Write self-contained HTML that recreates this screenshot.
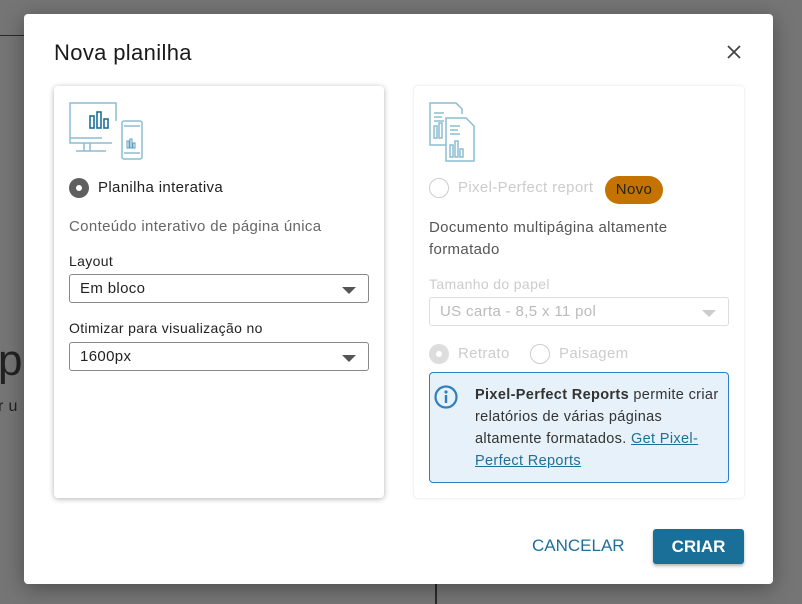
<!DOCTYPE html>
<html><head><meta charset="utf-8"><style>
*{box-sizing:border-box;margin:0;padding:0}
body{width:802px;height:602px;overflow:hidden;background:#757575;font-family:"Liberation Sans",sans-serif;position:relative;color:#222;letter-spacing:.35px}
.bgline{position:absolute;left:0;top:35px;width:30px;height:1px;background:#2a2a2a}
.vline{position:absolute;left:435px;top:584px;width:2px;height:20px;background:#2a2a2a}
.bgp{position:absolute;left:-2px;top:336px;font-size:44px;color:#222}
.bgr{position:absolute;left:-2px;top:398px;font-size:16px;color:#222}
.modal{position:absolute;left:24px;top:14px;width:749px;height:570px;background:#fff;border-radius:4px;box-shadow:0 4px 20px rgba(0,0,0,.35)}
h1{position:absolute;left:30px;top:26px;font-size:22px;font-weight:normal;color:#1a1a1a}
.close{position:absolute;left:702px;top:30px}
.card{position:absolute;top:72px;width:330px;background:#fff;border-radius:4px}
.c1{left:30px;height:412px;box-shadow:0 1px 6px rgba(0,0,0,.3)}
.c2{left:390px;height:412px;box-shadow:0 0 3px rgba(0,0,0,.12)}
.abs{position:absolute}
.radio{position:absolute;width:20px;height:20px;border-radius:50%}
.sel{border:1px solid #ddd;border-radius:3px;height:29px;position:absolute;left:15px;width:300px;font-size:15px;padding:5px 10px}
.arrow{position:absolute;right:12px;top:12px;width:0;height:0;border-left:7px solid transparent;border-right:7px solid transparent;border-top:7px solid #555}
</style></head><body>
<div class="bgline"></div><div class="vline"></div>
<div class="bgp">p</div><div class="bgr">r u</div>
<div class="modal">
<h1>Nova planilha</h1>
<svg class="close" width="16" height="16" viewBox="0 0 16 16"><path d="M2 2L14 14M14 2L2 14" stroke="#444" stroke-width="1.8"/></svg>

<div class="card c1">
<svg class="abs" style="left:14px;top:15px" width="76" height="60" viewBox="0 0 76 60">
<g fill="none" stroke="#8bbdd3" stroke-width="1.5"><path d="M48 20V2H2V42H44M34 37H2M16 42v8M22 42v8M8 50h30"/>
<rect x="54" y="20" width="20" height="38" rx="2"/><path d="M56 25h16M56 52h16"/></g>
<g fill="none" stroke="#1f6f98" stroke-width="1.6"><rect x="22" y="15" width="4" height="12"/><rect x="29" y="11" width="4" height="16"/><rect x="36" y="18" width="4" height="9"/></g>
<g fill="none" stroke="#5a9cbf" stroke-width="1"><rect x="59" y="40" width="2" height="7"/><rect x="62" y="38" width="2" height="9"/><rect x="65" y="42" width="2" height="5"/></g>
</svg>
<div class="radio" style="left:15px;top:92px;background:#5f5f5f"><div style="position:absolute;left:7px;top:7px;width:6px;height:6px;border-radius:50%;background:#fff"></div></div>
<div class="abs" style="left:44px;top:93px;font-size:15px;color:#222">Planilha interativa</div>
<div class="abs" style="left:15px;top:132px;font-size:15px;color:#666">Conteúdo interativo de página única</div>
<div class="abs" style="left:15px;top:167px;font-size:14px;color:#222">Layout</div>
<div class="sel" style="top:188px;border-color:#888">Em bloco<div class="arrow"></div></div>
<div class="abs" style="left:15px;top:234px;font-size:14px;color:#222">Otimizar para visualização no</div>
<div class="sel" style="top:256px;border-color:#888">1600px<div class="arrow"></div></div>
</div>

<div class="card c2">
<svg class="abs" style="left:14px;top:15px" width="50" height="62" viewBox="0 0 50 62">
<g fill="none" stroke="#8bbdd3" stroke-width="1.5"><path d="M16 2H2V44H18M16 2h12l6 6v5"/>
<path d="M18 17H38l8 8V60H18Z"/><path d="M6 12h10M6 16h8M6 20h10M22 25h10M22 29h8M22 33h10"/>
<rect x="6" y="25" width="3" height="12"/><rect x="11" y="22" width="3" height="15"/>
<rect x="22" y="44" width="3" height="12"/><rect x="27" y="40" width="3" height="16"/><rect x="32" y="48" width="3" height="8"/></g></svg>
<div class="radio" style="left:15px;top:92px;border:1.5px solid #ccc"></div>
<div class="abs" style="left:44px;top:93px;font-size:15px;color:#ccc">Pixel-Perfect report</div>
<div class="abs" style="left:191px;top:90px;width:58px;height:28px;border-radius:14px;background:#c47300;color:#222;font-size:15px;text-align:center;line-height:28px">Novo</div>
<div class="abs" style="left:15px;top:131px;font-size:15px;color:#555;line-height:22px;width:300px">Documento multipágina altamente<br>formatado</div>
<div class="abs" style="left:15px;top:190px;font-size:14px;color:#ccc">Tamanho do papel</div>
<div class="sel" style="top:211px;color:#bbb">US carta - 8,5 x 11 pol<div class="arrow" style="border-top-color:#ccc"></div></div>
<div class="radio" style="left:15px;top:258px;background:#ddd"><div style="position:absolute;left:7px;top:7px;width:6px;height:6px;border-radius:50%;background:#fff"></div></div>
<div class="abs" style="left:44px;top:259px;font-size:15px;color:#ccc">Retrato</div>
<div class="radio" style="left:116px;top:258px;border:1.5px solid #ccc"></div>
<div class="abs" style="left:145px;top:259px;font-size:15px;color:#ccc">Paisagem</div>
<div class="abs" style="left:15px;top:286px;width:300px;height:111px;background:#e7f1f9;border:1px solid #2d7fc1;border-radius:4px">
<svg class="abs" style="left:3px;top:11px" width="26" height="26" viewBox="0 0 26 26"><circle cx="13" cy="13" r="10.5" fill="none" stroke="#2d7fc1" stroke-width="2.2"/><circle cx="13" cy="8" r="1.6" fill="#2d7fc1"/><rect x="11.8" y="11" width="2.4" height="8" fill="#2d7fc1"/></svg>
<div class="abs" style="left:45px;top:11px;width:255px;font-size:14.5px;line-height:22px;color:#333;white-space:nowrap"><b>Pixel-Perfect Reports</b> permite criar<br>relatórios de várias páginas<br>altamente formatados. <span style="color:#1f6f98;text-decoration:underline">Get Pixel-<br>Perfect Reports</span></div>
</div>
</div>

<div class="abs" style="left:508px;top:522px;font-size:17px;color:#1f6f98;letter-spacing:0">CANCELAR</div>
<div class="abs" style="left:629px;top:515px;width:91px;height:35px;background:#1a6f98;border-radius:3px;color:#fff;font-weight:bold;font-size:17px;text-align:center;line-height:35px;box-shadow:0 2px 3px rgba(0,0,0,.3);letter-spacing:0">CRIAR</div>
</div>
</body></html>
